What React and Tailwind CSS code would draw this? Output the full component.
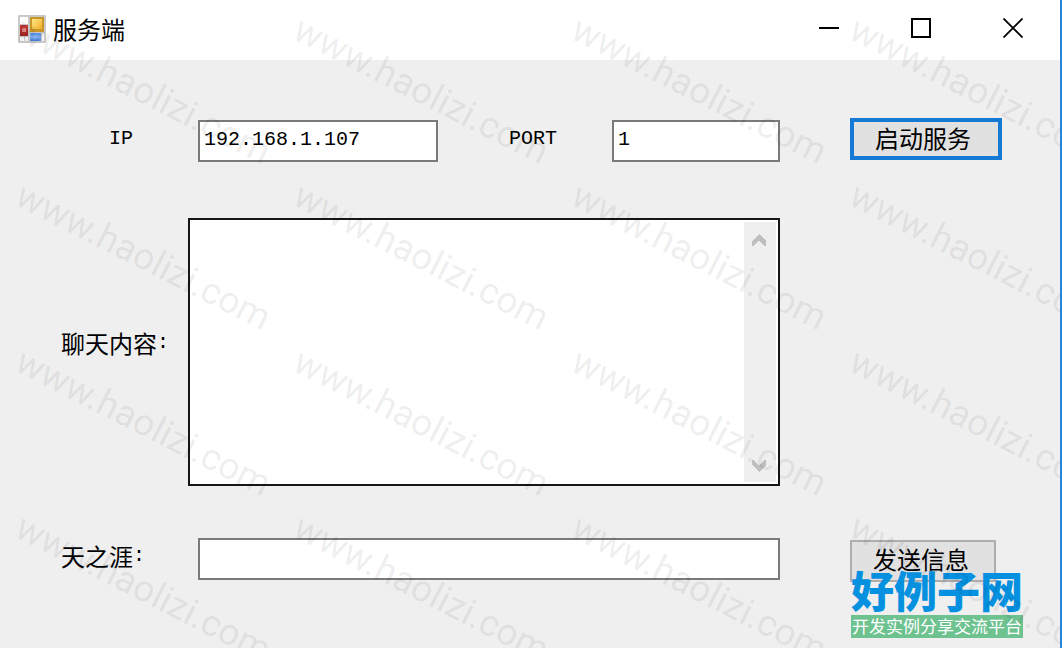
import React, { useState } from 'react';

const WATERMARKS = Array.from({ length: 16 }, (_, i) => i);

const cjk = "font-['Noto_Sans_CJK_SC',sans-serif]";
const mono = "font-['Liberation_Mono','Noto_Sans_CJK_SC',monospace]";
const fieldClass =
  "h-[42px] w-full min-w-0 border-2 border-[#7a7a7a] bg-white px-1 pb-1 text-xl text-black outline-none font-['Liberation_Mono','Noto_Sans_CJK_SC',monospace]";

const AppIcon = () => (
  <svg className="h-7 w-7 shrink-0" viewBox="0 0 28 28" aria-hidden="true">
    <defs>
      <linearGradient id="gold" x1="0" y1="0" x2="1" y2="1">
        <stop offset="0" stopColor="#ffe98a" />
        <stop offset="1" stopColor="#f2ae25" />
      </linearGradient>
      <linearGradient id="blue" x1="0" y1="0" x2="0" y2="1">
        <stop offset="0" stopColor="#4a86e0" />
        <stop offset="0.5" stopColor="#8ab6f5" />
        <stop offset="1" stopColor="#3f7bdc" />
      </linearGradient>
      <linearGradient id="red" x1="0" y1="0" x2="0" y2="1">
        <stop offset="0" stopColor="#c03a36" />
        <stop offset="1" stopColor="#a32322" />
      </linearGradient>
    </defs>
    <rect x="0" y="0" width="28" height="28" rx="1" fill="#c8c8c8" />
    <rect x="2" y="2" width="8" height="7" fill="#fff" />
    <rect x="2" y="22" width="4" height="4" fill="#fff" />
    <rect x="7" y="22" width="3" height="4" fill="#eee" />
    <rect x="24" y="18" width="2" height="8" fill="#f4f4f4" />
    <rect x="2" y="10" width="8" height="11" fill="url(#red)" />
    <rect x="4" y="13" width="4" height="4" fill="#df8380" />
    <rect x="12" y="2" width="14" height="15" fill="#c9962a" />
    <rect x="14" y="4" width="10" height="10" fill="url(#gold)" />
    <rect x="12" y="18" width="11" height="8" rx="1" fill="url(#blue)" />
  </svg>
);

const TitleBar = () => (
  <header className="flex h-[60px] items-start justify-between bg-white">
    <div className="flex h-[58px] items-center gap-[7px] pl-[18px]">
      <AppIcon />
      <h1 className={`text-2xl leading-none text-black ${cjk}`}>服务端</h1>
    </div>
    <div className="flex h-14 pr-px">
      <button type="button" aria-label="最小化" className="flex w-[92px] items-center justify-center hover:bg-gray-200">
        <svg width="20" height="20" viewBox="0 0 20 20"><path d="M0 10H20" stroke="#000" strokeWidth="2" /></svg>
      </button>
      <button type="button" aria-label="最大化" className="flex w-[92px] items-center justify-center hover:bg-gray-200">
        <svg width="20" height="20" viewBox="0 0 20 20"><rect x="1" y="1" width="18" height="18" fill="none" stroke="#000" strokeWidth="2" /></svg>
      </button>
      <button type="button" aria-label="关闭" className="flex w-[92px] items-center justify-center hover:bg-red-500">
        <svg width="20" height="20" viewBox="0 0 20 20"><path d="M.5 .5L19.5 19.5M19.5 .5L.5 19.5" stroke="#000" strokeWidth="1.8" /></svg>
      </button>
    </div>
  </header>
);

const Chevron = ({ down }) => (
  <svg width="14" height="12" viewBox="0 0 14 12" className={down ? 'rotate-180' : ''} shapeRendering="crispEdges">
    <path d="M7 0L14 7V12H12L7 6L2 12H0V7Z" fill="#bfbfbf" />
  </svg>
);

const Watermark = () => (
  <div
    aria-hidden="true"
    className="pointer-events-none absolute inset-0 grid auto-rows-[166px] grid-cols-[repeat(4,278px)] overflow-hidden pt-[7px] pl-[10px]"
  >
    {WATERMARKS.map((i) => (
      <span
        key={i}
        className="origin-bottom-left rotate-[27deg] self-start justify-self-start text-[37px] leading-9 whitespace-nowrap text-black/8 font-['Roboto',sans-serif]"
      >
        www.haolizi.com
      </span>
    ))}
  </div>
);

const SiteLogo = () => (
  <div className={`pointer-events-none absolute right-[37px] bottom-[10px] ${cjk}`}>
    <div className="pb-1 text-[43px] leading-[44px] font-black text-[#0591e0]">好例子网</div>
    <div className="h-[23px] bg-[#6dc28f] text-center text-[17px] leading-[22px] text-white">开发实例分享交流平台</div>
  </div>
);

const App = () => {
  const [ip, setIp] = useState('192.168.1.107');
  const [port, setPort] = useState('1');
  const [log, setLog] = useState('');
  const [message, setMessage] = useState('');

  const handleSend = () => {
    if (!message.trim()) return;
    setLog((prev) => `${prev}${message}\n`);
    setMessage('');
  };

  return (
    <div className="relative min-h-screen overflow-hidden border-r-2 border-[#2585d9] bg-[#efefef] text-black">
      <TitleBar />

      <main className="grid grid-cols-[188px_minmax(0,1fr)_210px] pt-[58px] pb-16">
        {/* Address */}
        <label htmlFor="ip" className={`pt-[7px] pl-[109px] text-xl ${mono}`}>IP</label>
        <div className="mr-[70px] grid grid-cols-[240fr_174px_168fr] items-start pt-[2px] pl-[10px]">
          <input id="ip" value={ip} onChange={(e) => setIp(e.target.value)} className={fieldClass} />
          <label htmlFor="port" className={`pt-[5px] pl-[71px] text-xl ${mono}`}>PORT</label>
          <input id="port" value={port} onChange={(e) => setPort(e.target.value)} className={fieldClass} />
        </div>
        <div>
          <button
            type="button"
            className={`h-[42px] w-[152px] border-4 border-[#147ad6] bg-[#e1e1e1] pr-1.5 pb-[3px] text-2xl leading-none ${cjk}`}
          >
            启动服务
          </button>
        </div>

        {/* Chat log */}
        <label htmlFor="log" className={`mt-14 flex items-center pb-[18px] pl-[61px] text-2xl ${cjk}`}>
          聊天内容<span className={`text-xl ${mono}`}>:</span>
        </label>
        <div className="mt-14 mr-[70px] flex h-[268px] border-2 border-[#161616] bg-white p-[2px]">
          <textarea
            id="log"
            readOnly
            value={log}
            className={`min-w-0 flex-1 resize-none px-1 text-xl outline-none ${mono}`}
          />
          <div className="flex w-8 flex-col items-center justify-between bg-[#efefef] pt-3 pr-0.5 pb-[10px]">
            <Chevron />
            <Chevron down />
          </div>
        </div>
        <div />

        {/* Message */}
        <label htmlFor="message" className={`mt-[52px] flex h-9 items-center pl-[61px] text-2xl ${cjk}`}>
          天之涯<span className={`text-xl ${mono}`}>:</span>
        </label>
        <div className="mt-[52px] mr-[70px] flex pl-[10px]">
          <input
            id="message"
            value={message}
            onChange={(e) => setMessage(e.target.value)}
            className={fieldClass}
          />
        </div>
        <div className="mt-[54px]">
          <button
            type="button"
            onClick={handleSend}
            className={`h-[42px] w-[146px] border-2 border-[#adadad] bg-[#e1e1e1] pr-1 pb-1 text-2xl leading-none ${cjk}`}
          >
            发送信息
          </button>
        </div>
      </main>

      <SiteLogo />
      <Watermark />
    </div>
  );
};

export default App;
